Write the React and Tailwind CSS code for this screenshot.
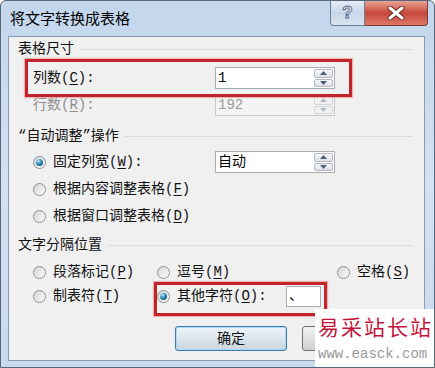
import React from 'react';

const FONT = "[font-family:'Liberation_Mono','Noto_Sans_CJK_SC',monospace]";

const Radio = ({ checked }) => (
  <span className="flex h-[13px] w-[13px] shrink-0 items-center justify-center rounded-full border border-[#8c9094] bg-gradient-to-br from-[#d2d4d6] to-[#fdfdfd]">
    {checked && (
      <span className="h-[7px] w-[7px] rounded-full bg-[radial-gradient(circle_at_35%_30%,#bdeeff_0%,#2f88b5_45%,#0a3757_100%)]" />
    )}
  </span>
);

const Arrow = ({ up, disabled }) => (
  <svg width="7" height="4" viewBox="0 0 7 4">
    <path d={up ? 'M0 4 L3.5 0 L7 4Z' : 'M0 0 L3.5 4 L7 0Z'} fill={disabled ? '#b5bcc6' : '#4b5d7c'} />
  </svg>
);

const Spin = ({ value, disabled }) => (
  <div
    className={`flex h-[22px] w-[120px] shrink-0 border ${
      disabled ? 'border-[#c6c8cc] bg-[#f4f4f4] text-[#9b9b9b]' : 'border-[#abadb3] bg-white text-black'
    }`}
  >
    <div className="flex flex-1 items-center pl-[2px]">{value}</div>
    <div className="flex w-[21px] flex-col gap-px p-px">
      <span className={`flex flex-1 items-center justify-center rounded-[2px] border ${disabled ? 'border-[#d4d6da] bg-[#f2f2f2]' : 'border-[#b4b9c2] bg-gradient-to-b from-[#f6f7f9] to-[#dde1e7]'}`}>
        <Arrow up disabled={disabled} />
      </span>
      <span className={`flex flex-1 items-center justify-center rounded-[2px] border ${disabled ? 'border-[#d4d6da] bg-[#f2f2f2]' : 'border-[#b4b9c2] bg-gradient-to-b from-[#f6f7f9] to-[#dde1e7]'}`}>
        <Arrow disabled={disabled} />
      </span>
    </div>
  </div>
);

const Heading = ({ children, className = '' }) => (
  <div className={`flex h-[24px] items-center pl-[9px] pr-[11px] ${className}`}>
    <span className="whitespace-nowrap">{children}</span>
    <span className="ml-[6px] h-px flex-1 bg-[#d9dde2]" />
  </div>
);

const Key = ({ k }) => (
  <>
    (<u className="underline-offset-2">{k}</u>)
  </>
);

const RadioLabel = ({ checked, children, className = '' }) => (
  <div className={`flex items-center gap-[7px] ${className}`}>
    <Radio checked={checked} />
    <span className="whitespace-nowrap">{children}</span>
  </div>
);

export default function App() {
  return (
    <div className={`relative flex h-[368px] w-[435px] flex-col overflow-hidden rounded-t-[6px] border border-[#56677c] bg-gradient-to-b from-[#c3d6ec] via-[#d3e1f1] to-[#c9daee] text-[14px] leading-[20px] text-[#111] ${FONT}`}>
      {/* Title bar */}
      <div className="flex h-[35px] shrink-0 items-start">
        <span className="ml-[9px] mt-[11px] text-[15px] leading-[18px] text-black">将文字转换成表格</span>
        <div className="ml-auto mr-[6px] flex h-[25px]">
          <div className="flex w-[35px] items-center justify-center rounded-bl-[4px] border border-t-0 border-[#6e7f97] bg-gradient-to-b from-[#e4edf7] via-[#c7d6e8] to-[#d9e5f2] text-[17px] font-bold text-[#eef3f8] [-webkit-text-stroke:1px_#61718a] [font-family:'Liberation_Sans',sans-serif]">
            ?
          </div>
          <div className="flex w-[63px] items-center justify-center rounded-br-[4px] border border-l-0 border-t-0 border-[#7a3a34] bg-gradient-to-b from-[#e8a495] via-[#c8463a] to-[#dc7866]">
            <svg width="20" height="14" viewBox="0 0 20 14">
              <path d="M4 2 L16 12 M16 2 L4 12" stroke="#6b2a24" strokeWidth="5" strokeLinecap="round" />
              <path d="M4 2 L16 12 M16 2 L4 12" stroke="#ffffff" strokeWidth="3" strokeLinecap="round" />
            </svg>
          </div>
        </div>
      </div>

      {/* Client area */}
      <div className="ml-[7px] mr-[9px] flex h-[325px] shrink-0 flex-col border border-[#8b9bb0] bg-[#f0f0f0]">
        <Heading>表格尺寸</Heading>

        <div className="mt-[5px] flex h-[24px] items-center pl-[24px]">
          <span className="w-[182px] whitespace-nowrap">列数<Key k="C" />:</span>
          <Spin value="1" />
        </div>
        <div className="mt-[3px] flex h-[24px] items-center pl-[24px] text-[#8f8f8f]">
          <span className="w-[182px] whitespace-nowrap">行数<Key k="R" />:</span>
          <Spin value="192" disabled />
        </div>

        <Heading className="mt-[7px]">“自动调整”操作</Heading>

        <div className="mt-[2px] flex h-[24px] items-center pl-[24px]">
          <RadioLabel checked className="w-[182px]">固定列宽<Key k="W" />:</RadioLabel>
          <Spin value="自动" />
        </div>
        <div className="mt-[3px] flex h-[24px] items-center pl-[24px]">
          <RadioLabel>根据内容调整表格<Key k="F" /></RadioLabel>
        </div>
        <div className="mt-[3px] flex h-[24px] items-center pl-[24px]">
          <RadioLabel>根据窗口调整表格<Key k="D" /></RadioLabel>
        </div>

        <Heading className="mt-[5px]">文字分隔位置</Heading>

        <div className="mt-[3px] flex h-[24px] items-center pl-[24px]">
          <RadioLabel className="w-[124px]">段落标记<Key k="P" /></RadioLabel>
          <RadioLabel className="w-[180px]">逗号<Key k="M" /></RadioLabel>
          <RadioLabel>空格<Key k="S" /></RadioLabel>
        </div>
        <div className="flex h-[24px] items-center pl-[24px]">
          <RadioLabel className="w-[124px]">制表符<Key k="T" /></RadioLabel>
          <div className="flex items-center">
            <Radio checked />
            <span className="ml-[7px] w-[109px] whitespace-nowrap">其他字符<Key k="O" />:</span>
            <div className="flex h-[21px] w-[35px] items-center border border-[#abadb3] bg-white pl-[2px]">、</div>
          </div>
        </div>

        <div className="mt-[18px] flex items-center gap-[15px] pl-[166px]">
          <button className="flex h-[25px] w-[112px] items-center justify-center rounded-[3px] border border-[#3d7bad] bg-gradient-to-b from-[#edf4f9] via-[#dde6ee] to-[#c9d4de] shadow-[inset_0_0_0_1px_#a9dbf6]">
            确定
          </button>
          {/* second button, hidden under the site watermark */}
          <div className="h-[25px] w-[112px] rounded-[3px] border border-[#707070] bg-gradient-to-b from-[#f2f2f2] to-[#d0d0d0]" />
        </div>
      </div>

      {/* Red annotation boxes */}
      <div className="pointer-events-none absolute left-[24px] top-[58px] h-[38px] w-[327px] border-[3px] border-[#c3232b] shadow-[0_0_1px_1px_rgba(232,140,140,0.6)]" />
      <div className="pointer-events-none absolute left-[153px] top-[281px] h-[34px] w-[173px] border-[3px] border-[#c3232b] shadow-[0_0_1px_1px_rgba(232,140,140,0.6)]" />

      {/* Site watermark */}
      <div className="absolute left-[314px] top-[308px] flex h-[60px] w-[121px] flex-col items-start bg-white pl-[3px] pt-[5px]">
        <span className="text-[21px] leading-[24px] tracking-[2px] text-[#c4143c] [font-family:'Noto_Sans_CJK_SC',sans-serif]">易采站长站</span>
        <span className="mt-[9px] text-[14px] leading-[14px] text-[#9a9a9a] [font-family:'Liberation_Mono',monospace]">www.easck.com</span>
      </div>
    </div>
  );
}
